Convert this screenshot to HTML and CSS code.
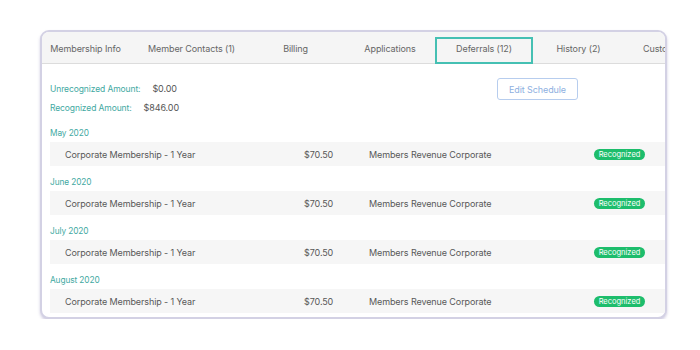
FILE: index.html
```html
<!DOCTYPE html>
<html>
<head>
<meta charset="utf-8">
<link rel="stylesheet" href="styles.css">
</head>
<body>
<div class="card">
  <div class="tabs">
    <div class="tab t1">Membership Info</div>
    <div class="tab t2">Member Contacts (1)</div>
    <div class="tab t3">Billing</div>
    <div class="tab t4">Applications</div>
    <div class="tab t5 active">Deferrals (12)</div>
    <div class="tab t6">History (2)</div>
    <div class="tab t7">Custom Fields</div>
  </div>
  <div class="content">
    <div class="summary">
      <div class="amounts">
        <div class="amount"><span class="label">Unrecognized Amount:</span><span class="value">$0.00</span></div>
        <div class="amount"><span class="label">Recognized Amount:</span><span class="value">$846.00</span></div>
      </div>
      <button class="edit">Edit Schedule</button>
    </div>

    <div class="month">May 2020</div>
    <div class="row">
      <span class="item">Corporate Membership - 1 Year</span>
      <span class="price">$70.50</span>
      <span class="account">Members Revenue Corporate</span>
      <span class="badge">Recognized</span>
    </div>

    <div class="month">June 2020</div>
    <div class="row">
      <span class="item">Corporate Membership - 1 Year</span>
      <span class="price">$70.50</span>
      <span class="account">Members Revenue Corporate</span>
      <span class="badge">Recognized</span>
    </div>

    <div class="month">July 2020</div>
    <div class="row">
      <span class="item">Corporate Membership - 1 Year</span>
      <span class="price">$70.50</span>
      <span class="account">Members Revenue Corporate</span>
      <span class="badge">Recognized</span>
    </div>

    <div class="month">August 2020</div>
    <div class="row">
      <span class="item">Corporate Membership - 1 Year</span>
      <span class="price">$70.50</span>
      <span class="account">Members Revenue Corporate</span>
      <span class="badge">Recognized</span>
    </div>
  </div>
</div>
</body>
</html>
```

FILE: styles.css
```css
* { box-sizing: border-box; }

html, body {
  margin: 0;
  padding: 0;
  background: #ffffff;
}

body {
  font-family: Inter, "Open Sans", sans-serif;
  font-size: 9px;
  letter-spacing: -0.1px;
  color: #585858;
}

.card {
  margin: 30px 0 0 40px;
  width: 627px;
  border: 2px solid #d3d1e4;
  border-radius: 9px;
  overflow: hidden;
  background: #ffffff;
  box-shadow: 0 2px 3px rgba(120, 110, 170, 0.35);
}

.tabs {
  display: grid;
  grid-template-columns: 87px 125px 87px 94px 98px 91px 1fr;
  height: 32px;
  background: #f5f5f5;
  border-bottom: 1px solid #dcdcdc;
  white-space: nowrap;
}

.tab {
  position: relative;
  display: flex;
  align-items: center;
  justify-content: center;
  padding-top: 2px;
  color: #666666;
}

.t3 { padding-right: 4px; }
.t4 { padding-left: 4px; }
.t7 { justify-content: flex-start; padding-left: 19px; overflow: hidden; }

.tab.active::after {
  content: "";
  position: absolute;
  top: 5px;
  left: 0;
  right: 0;
  bottom: -1px;
  border: 2px solid #45c0b3;
}

.content {
  padding: 15px 0 4px 8px;
}

.summary {
  display: flex;
  align-items: flex-start;
}

.amounts {
  width: 447px;
}

.amount {
  height: 19px;
  line-height: 19px;
}

.label {
  color: #42a9a2;
  font-size: 8.5px;
  margin-right: 12px;
}

.value {
  color: #555555;
}

.edit {
  margin-top: -1px;
  width: 81px;
  height: 22px;
  padding: 0;
  background: #ffffff;
  border: 1px solid #b7cdee;
  border-radius: 3px;
  color: #8eb0df;
  font-family: inherit;
  font-size: 9px;
  letter-spacing: -0.1px;
}

.month {
  padding: 8px 0 1px 0;
  line-height: 16px;
  font-size: 8.3px;
  color: #42a9a2;
}

.row {
  display: grid;
  grid-template-columns: 239px 65px 1fr auto;
  align-items: center;
  height: 24px;
  padding: 0 20px 0 15px;
  background: #f6f6f6;
}

.badge {
  display: inline-block;
  width: 51px;
  height: 11px;
  line-height: 11px;
  border-radius: 6px;
  background: #1dbd6c;
  color: #ffffff;
  font-size: 7.5px;
  letter-spacing: 0;
  text-align: center;
}
```
